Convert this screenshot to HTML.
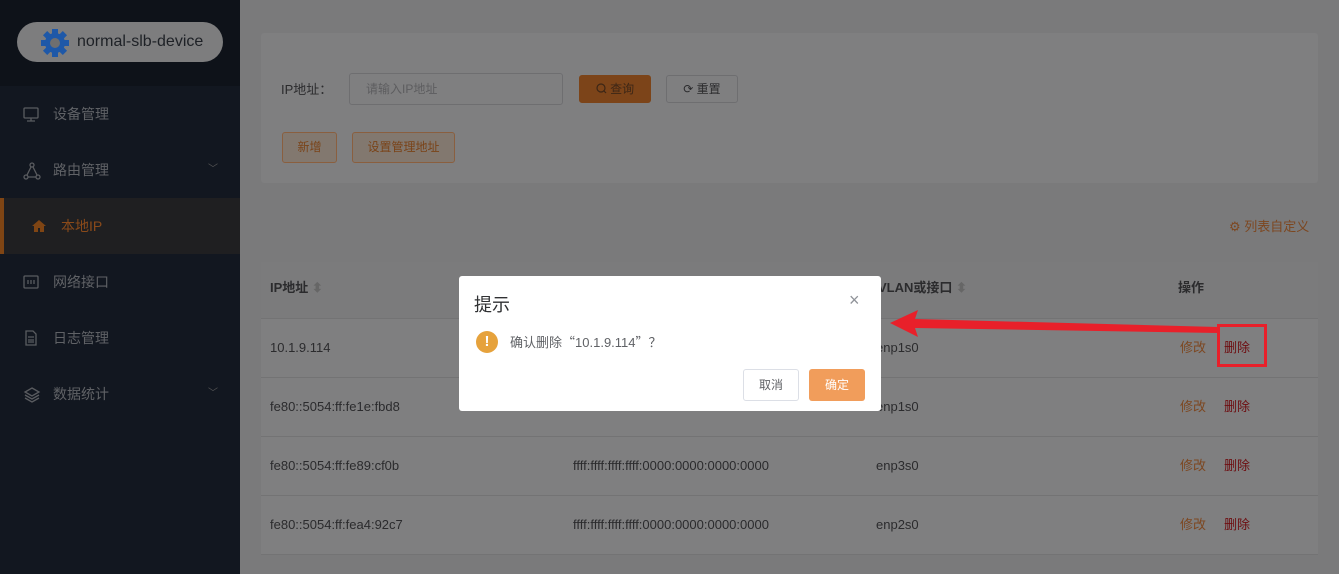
<!DOCTYPE html>
<html><head><meta charset="utf-8"><style>
*{margin:0;padding:0;box-sizing:border-box}
body{width:1339px;height:574px;overflow:hidden;background:#7a7a7b;font-family:"Liberation Sans","Noto Sans CJK SC",sans-serif;position:relative;font-size:13px;color:#2b2b2d}
.side{position:absolute;left:0;top:0;width:240px;height:574px;background:#121720}
.top{position:absolute;left:0;top:0;width:240px;height:86px;background:#0e1219}
.pill{position:absolute;left:17px;top:22px;width:206px;height:40px;border-radius:20px;background:#7d7d7e;color:#1e2126;font-size:16px;line-height:40px;padding-left:60px}
.gear{position:absolute;left:40px;top:28px}
.mi{position:absolute;left:0;width:240px;height:56px;line-height:56px;color:#606266;font-size:14px;padding-left:53px}
.mi svg{position:absolute;left:23px;top:20px}
.mi .ch{position:absolute;left:208px;top:0;color:#555;font-size:10px}
.act{background:#1f1f21;color:#8a4a1a;padding-left:57px;border-left:4px solid #7f4514}
.card{position:absolute;left:261px;top:33px;width:1057px;height:150px;background:#7f7f80;border-radius:3px}
.btn{position:absolute;height:28px;line-height:26px;font-size:12px;border-radius:3px;text-align:center}
.tbl{position:absolute;left:261px;top:262px;width:1057px}
.th{height:56px;background:#7b7b7c;font-weight:bold;color:#2b2b2d;line-height:52px;position:relative}
.tr{height:59px;border-top:1px solid #737374;position:relative;line-height:57px;background:#7f7f80}
.c{position:absolute;top:0}
.ed{color:#7d4720}.del{color:#6e0d10}
.modal{position:absolute;left:459px;top:276px;width:422px;height:135px;background:#fff;border-radius:3px}
.cjk{font-family:"Noto Sans CJK SC",sans-serif}
</style></head><body>
<div class="side">
<div class="top"></div>
<div class="pill">normal-slb-device</div>
<svg class="gear" width="30" height="30" viewBox="0 0 30 30"><g fill="#1e58a8"><circle cx="15" cy="15" r="10"/><g id="t"><rect x="12" y="1" width="6" height="6"/><rect x="12" y="23" width="6" height="6"/><rect x="1" y="12" width="6" height="6"/><rect x="23" y="12" width="6" height="6"/></g><use href="#t" transform="rotate(45 15 15)"/></g><circle cx="15" cy="15" r="5" fill="#6f6f70"/></svg>
<div class="mi" style="top:86px"><svg width="16" height="16" viewBox="0 0 16 16" fill="none" stroke="#5a5c60" stroke-width="1.3"><rect x="1" y="2" width="14" height="10" rx="1"/><path d="M8 12v3M4 15h8"/></svg>设备管理</div>
<div class="mi" style="top:142px"><svg width="18" height="18" viewBox="0 0 18 18" fill="none" stroke="#5a5c60" stroke-width="1.3"><circle cx="9" cy="3" r="2"/><circle cx="3" cy="15" r="2"/><circle cx="15" cy="15" r="2"/><path d="M8 5L4 13M10 5l4 8M5 15h8"/></svg>路由管理<span class="ch">﹀</span></div>
<div class="mi act" style="top:198px"><svg width="16" height="16" viewBox="0 0 16 16" style="left:27px"><path d="M1 8L8 2l7 6h-2v6H9v-4H7v4H3V8z" fill="#7f4514"/></svg>本地IP</div>
<div class="mi" style="top:254px"><svg width="16" height="16" viewBox="0 0 16 16" fill="none" stroke="#5a5c60" stroke-width="1.3"><rect x="1" y="2" width="14" height="12" rx="1"/><path d="M5 6v4M8 6v4M11 6v4"/></svg>网络接口</div>
<div class="mi" style="top:310px"><svg width="16" height="16" viewBox="0 0 16 16" fill="none" stroke="#5a5c60" stroke-width="1.3"><path d="M3 1h7l3 3v11H3z"/><path d="M5 7h6M5 10h6M5 12h6"/></svg>日志管理</div>
<div class="mi" style="top:366px"><svg width="18" height="18" viewBox="0 0 18 18" fill="none" stroke="#5a5c60" stroke-width="1.3"><path d="M9 2l7 4-7 4-7-4z"/><path d="M2 9l7 4 7-4M2 12l7 4 7-4"/></svg>数据统计<span class="ch">﹀</span></div>
</div>

<div class="card">
<div style="position:absolute;left:20px;top:46px;font-size:13px;color:#2b2b2d">IP地址<span class="cjk">：</span></div>
<div style="position:absolute;left:88px;top:40px;width:214px;height:32px;border:1px solid #6e6e70;border-radius:3px;color:#5d5d5f;line-height:30px;padding-left:16px;font-size:12px">请输入IP地址</div>
<div class="btn" style="left:318px;top:42px;width:72px;background:#7c4419;color:#3c2616;border:1px solid #7c4419"><svg width="11" height="11" viewBox="0 0 11 11" style="vertical-align:-1px" fill="none" stroke="#3c2616" stroke-width="1.2"><circle cx="5" cy="5" r="4"/><path d="M8 8l2 2"/></svg> 查询</div>
<div class="btn" style="left:405px;top:42px;width:72px;border:1px solid #6e6e70;color:#2b2b2d">⟳ 重置</div>
<div class="btn" style="left:21px;top:99px;width:55px;height:31px;line-height:29px;border:1px solid #8a5f3f;background:#82786f;color:#7a4318">新增</div>
<div class="btn" style="left:91px;top:99px;width:103px;height:31px;line-height:29px;border:1px solid #8a5f3f;background:#82786f;color:#7a4318">设置管理地址</div>
</div>
<div style="position:absolute;left:1229px;top:216px;color:#7d4720;font-size:13px">⚙ 列表自定义</div>

<div class="tbl">
<div class="th"><span class="c" style="left:9px">IP地址 <span style="color:#666">⬍</span></span><span class="c" style="left:617px">VLAN或接口 <span style="color:#666">⬍</span></span><span class="c" style="left:917px">操作</span></div>
<div class="tr"><span class="c" style="left:9px">10.1.9.114</span><span class="c" style="left:615px">enp1s0</span><span class="c ed" style="left:919px">修改</span><span class="c del" style="left:963px">删除</span></div>
<div class="tr"><span class="c" style="left:9px">fe80::5054:ff:fe1e:fbd8</span><span class="c" style="left:615px">enp1s0</span><span class="c ed" style="left:919px">修改</span><span class="c del" style="left:963px">删除</span></div>
<div class="tr"><span class="c" style="left:9px">fe80::5054:ff:fe89:cf0b</span><span class="c" style="left:312px">ffff:ffff:ffff:ffff:0000:0000:0000:0000</span><span class="c" style="left:615px">enp3s0</span><span class="c ed" style="left:919px">修改</span><span class="c del" style="left:963px">删除</span></div>
<div class="tr"><span class="c" style="left:9px">fe80::5054:ff:fea4:92c7</span><span class="c" style="left:312px">ffff:ffff:ffff:ffff:0000:0000:0000:0000</span><span class="c" style="left:615px">enp2s0</span><span class="c ed" style="left:919px">修改</span><span class="c del" style="left:963px">删除</span></div>
<div style="height:1px;background:#737374"></div>
</div>

<div class="modal">
<div style="position:absolute;left:15px;top:15px;font-size:18px;color:#303133">提示</div>
<div style="position:absolute;left:390px;top:14px;font-size:18px;color:#909399">×</div>
<div style="position:absolute;left:17px;top:55px;width:22px;height:22px;border-radius:50%;background:#e6a23c;color:#fff;text-align:center;line-height:22px;font-weight:bold;font-size:15px">!</div>
<div style="position:absolute;left:51px;top:56px;font-size:13px;color:#606266">确认删除<span class="cjk">“</span>10.1.9.114<span class="cjk">”？</span></div>
<div class="btn" style="left:284px;top:93px;width:56px;height:32px;line-height:30px;border:1px solid #dcdfe6;color:#606266">取消</div>
<div class="btn" style="left:350px;top:93px;width:56px;height:32px;line-height:32px;background:#f19d5b;color:#fff">确定</div>
</div>

<svg style="position:absolute;left:0;top:0" width="1339" height="574">
<polygon points="1218,327 1218,333 915,328 918,337 890,323 918,310 915,319" fill="#e8202a"/>
<rect x="1218.5" y="325.5" width="47" height="40" fill="none" stroke="#e8202a" stroke-width="3"/>
</svg>
</body></html>
